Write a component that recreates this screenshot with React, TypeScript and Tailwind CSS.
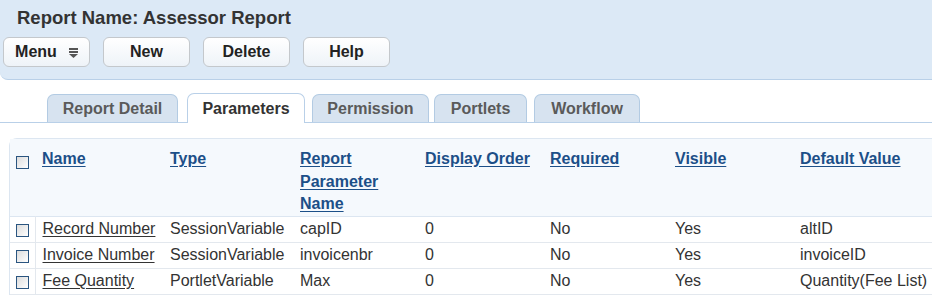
import React from 'react'

const tabs = [
    { label: 'Report Detail', cls: 'ml-0 w-[131px]' },
    { label: 'Parameters', cls: 'ml-[9px] w-[118px]' },
    { label: 'Permission', cls: 'ml-[7px] w-[117px]' },
    { label: 'Portlets', cls: 'ml-[5px] w-[93px]' },
    { label: 'Workflow', cls: 'ml-[7px] w-[106px]' },
]

const rows = [
    { name: 'Record Number', type: 'SessionVariable', param: 'capID', order: '0', required: 'No', visible: 'Yes', def: 'altID' },
    { name: 'Invoice Number', type: 'SessionVariable', param: 'invoicenbr', order: '0', required: 'No', visible: 'Yes', def: 'invoiceID' },
    { name: 'Fee Quantity', type: 'PortletVariable', param: 'Max', order: '0', required: 'No', visible: 'Yes', def: 'Quantity(Fee List)' },
]

function Checkbox() {
    return (
        <span className="inline-block h-[13px] w-[13px] border border-[#2a5580] bg-gradient-to-br from-[#dcdcdc] to-[#ffffff] align-middle" />
    )
}

function Button({ children, className }: { children: React.ReactNode; className?: string }) {
    return (
        <button className={'flex h-[30px] w-[87px] items-center justify-center rounded-[6px] border border-[#c4c8cc] bg-gradient-to-b from-[#ffffff] to-[#eef3f8] text-[16px] font-bold text-[#222] ' + (className || '')}>
            {children}
        </button>
    )
}

export default function App() {
    return (
        <div className="h-[297px] w-[932px] overflow-hidden bg-white font-['Liberation_Sans',Arial,sans-serif]">
            {/* Header */}
            <div className="h-[80px] rounded-bl-[8px] border-b border-[#b9d0e8] bg-[#dce9f6] pl-[3px] pt-[6px]">
                <div className="pl-[14px] text-[18.5px] font-bold leading-[24px] text-[#333]">Report Name: Assessor Report</div>
                <div className="mt-[7px] flex gap-[13px]">
                    <Button className="w-[86px] gap-[12px]">
                        <span>Menu</span>
                        <svg width="9" height="10" viewBox="0 0 9 10" className="mt-[1px]">
                            <rect x="0" y="0" width="9" height="2" fill="#555" />
                            <rect x="0" y="3" width="9" height="2" fill="#555" />
                            <polygon points="0,6 9,6 4.5,10" fill="#555" />
                        </svg>
                    </Button>
                    <Button>New</Button>
                    <Button>Delete</Button>
                    <Button>Help</Button>
                </div>
            </div>

            {/* Tabs */}
            <div className="mt-[14px] flex h-[29px] items-end border-b border-[#b9d0e8] pl-[47px]">
                {tabs.map((t) => {
                    const active = t.label === 'Parameters'
                    return (
                        <div
                            key={t.label}
                            className={
                                t.cls +
                                (active
                                    ? ' -mb-px flex h-[30px] items-center justify-center rounded-t-[7px] border border-b-0 border-[#b9d0e8] bg-white text-[16px] font-bold text-[#333]'
                                    : ' flex h-[28px] items-center justify-center rounded-t-[7px] border border-b-0 border-[#b3cbe3] bg-[#d7e3f0] text-[16px] font-bold text-[#5a5a5a]')
                            }
                        >
                            {t.label}
                        </div>
                    )
                })}
            </div>

            {/* Table panel */}
            <div className="ml-[9px] mt-[15px] rounded-tl-[8px] border-l border-t border-[#dce6f1]">
                <table className="w-[1000px] table-fixed border-collapse text-[16px] text-[#333]">
                    <colgroup>
                        <col className="w-[25px]" />
                        <col className="w-[128px]" />
                        <col className="w-[130px]" />
                        <col className="w-[125px]" />
                        <col className="w-[125px]" />
                        <col className="w-[125px]" />
                        <col className="w-[125px]" />
                        <col />
                    </colgroup>
                    <thead>
                        <tr className="h-[77px] border-b border-[#dce6f1] bg-[#f5f9fd] text-left align-top">
                            <th className="pl-[6px] pt-[11px] font-normal"><Checkbox /></th>
                            {['Name', 'Type', 'Report Parameter Name', 'Display Order', 'Required', 'Visible', 'Default Value'].map((h) => (
                                <th key={h} className="pl-[7px] pr-[4px] pt-[9px] text-[16px] font-bold leading-[22.5px] text-[#1c4f88]">
                                    <span className="underline underline-offset-[2px]">{h}</span>
                                </th>
                            ))}
                        </tr>
                    </thead>
                    <tbody>
                        {rows.map((r) => (
                            <tr key={r.name} className="h-[26px] border-b border-[#e3e8ee] leading-[20px]">
                                <td className="border-r border-[#e3e8ee] pl-[6px] pt-[2px]"><Checkbox /></td>
                                <td className="pl-[7px]"><span className="underline underline-offset-[2px]">{r.name}</span></td>
                                <td className="pl-[7px]">{r.type}</td>
                                <td className="pl-[7px]">{r.param}</td>
                                <td className="pl-[7px]">{r.order}</td>
                                <td className="pl-[7px]">{r.required}</td>
                                <td className="pl-[7px]">{r.visible}</td>
                                <td className="pl-[7px]">{r.def}</td>
                            </tr>
                        ))}
                    </tbody>
                </table>
            </div>
        </div>
    )
}
